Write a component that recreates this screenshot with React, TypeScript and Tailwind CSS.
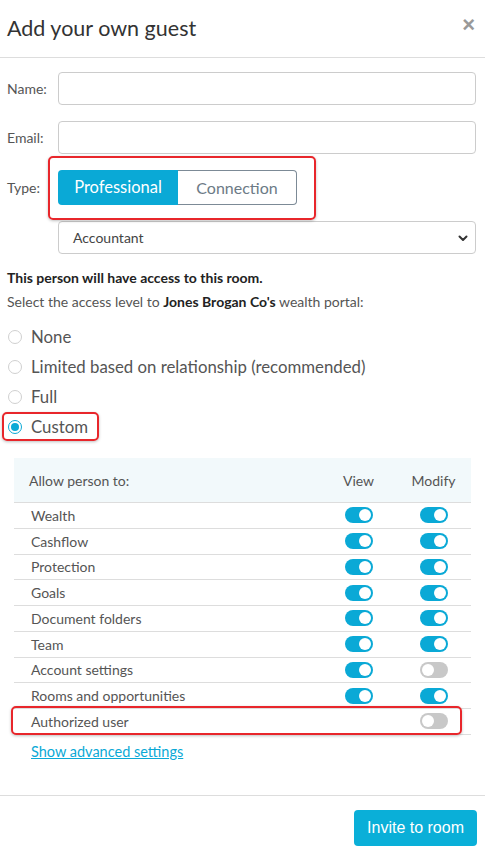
import React from "react"

const permissions = [
    { label: "Wealth", view: true, modify: true },
    { label: "Cashflow", view: true, modify: true },
    { label: "Protection", view: true, modify: true },
    { label: "Goals", view: true, modify: true },
    { label: "Document folders", view: true, modify: true },
    { label: "Team", view: true, modify: true },
    { label: "Account settings", view: true, modify: false },
    { label: "Rooms and opportunities", view: true, modify: true },
    { label: "Authorized user", view: null, modify: false, highlight: true },
]

const levels = ["None", "Limited based on relationship (recommended)", "Full", "Custom"]

const Toggle = ({ on }: { on: boolean }) => (
    <div className={`flex h-[16px] w-[28px] items-center rounded-full px-[2px] ${on ? "justify-end bg-[#0aa9d6]" : "justify-start bg-[#c8c8c8]"}`}>
        <div className="h-[12px] w-[12px] rounded-full bg-white" />
    </div>
)

const Highlight = ({ className }: { className: string }) => (
    <div className={`pointer-events-none absolute rounded-[5px] border-2 border-[#e8262b] shadow-[0_1px_3px_rgba(0,0,0,0.25)] ${className}`} />
)

const Field = ({ label, children }: { label: string; children: React.ReactNode }) => (
    <div className="flex items-center">
        <div className="w-[51px] shrink-0 text-[14px] text-[#555]">{label}</div>
        <div className="flex-1">{children}</div>
    </div>
)

const App = () => {
    return (
        <div className="min-h-[854px] w-[485px] bg-white text-[#444]" style={{ fontFamily: "Lato, 'Noto Sans', sans-serif" }}>
            <div className="flex h-[58px] items-center justify-between border-b border-[#ddd] pl-[7px] pr-[10px]">
                <div className="text-[21.5px] text-[#333]">{`Add your own guest`}</div>
                <div className="-mt-[8px] text-[22px] font-bold leading-none text-[#999]" style={{ fontFamily: "'Liberation Sans', sans-serif" }}>×</div>
            </div>

            <div className="flex flex-col gap-[16px] pl-[7px] pr-[9px] pt-[14px]">
                <Field label="Name:">
                    <div className="h-[33px] rounded-[4px] border border-[#ccc]" />
                </Field>
                <Field label="Email:">
                    <div className="h-[33px] rounded-[4px] border border-[#ccc]" />
                </Field>
                <Field label="Type:">
                    <div className="relative flex h-[35px] w-[239px]">
                        <Highlight className="-left-[10px] -right-[19px] -top-[14px] -bottom-[15px]" />
                        <div className="flex w-[120px] items-center justify-center rounded-l-[4px] bg-[#0aa9d6] text-[16.5px] text-white">{`Professional`}</div>
                        <div className="flex flex-1 items-center justify-center rounded-r-[4px] border border-l-0 border-[#7c8a96] text-[16px] text-[#6c7a86]">{`Connection`}</div>
                    </div>
                </Field>
                <Field label="">
                    <div className="flex h-[33px] items-center justify-between rounded-[4px] border border-[#ccc] pl-[14px] pr-[6px] text-[14px] text-[#444]">
                        <span>{`Accountant`}</span>
                        <svg width="12" height="12" viewBox="0 0 12 12" fill="none" stroke="#333" strokeWidth="2" strokeLinecap="round" strokeLinejoin="round">
                            <path d="M2.5 4.5 6 8l3.5-3.5" />
                        </svg>
                    </div>
                </Field>
            </div>

            <div className="pl-[7px] pt-[15px]">
                <div className="text-[14px] font-bold leading-[18px] text-[#222]">{`This person will have access to this room.`}</div>
                <div className="mt-[6px] text-[14px] leading-[18px] text-[#555]">
                    {`Select the access level to `}
                    <span className="font-bold text-[#222]">{`Jones Brogan Co's`}</span>
                    {` wealth portal:`}
                </div>
            </div>

            <div className="mt-[11px] flex flex-col pl-[8px]">
                {levels.map((level) => {
                    const checked = level === "Custom"
                    return (
                        <div key={level} className="flex h-[30px] items-center gap-[9px]">
                            <div className="relative flex items-center">
                                {checked && <Highlight className="-left-[6px] -top-[8px] -bottom-[7px] w-[97px]" />}
                                <div className={`flex h-[14px] w-[14px] items-center justify-center rounded-full border ${checked ? "border-[#0aa9d6]" : "border-[#d0d0d0]"}`}>
                                    {checked && <div className="h-[8px] w-[8px] rounded-full bg-[#0aa9d6]" />}
                                </div>
                            </div>
                            <span className="text-[16.8px] text-[#555]">{level}</span>
                        </div>
                    )
                })}
            </div>

            <div className="mx-[14px] mt-[16px]">
                <div className="flex h-[45px] items-center border-b border-[#ddd] bg-[#f2f9fb] text-[14px] text-[#555]">
                    <div className="flex-1 pl-[15px]">{`Allow person to:`}</div>
                    <div className="w-[75px] text-center">{`View`}</div>
                    <div className="w-[75px] text-center">{`Modify`}</div>
                </div>
                {permissions.map((p) => (
                    <div key={p.label} className="relative flex h-[25.75px] items-center border-b border-[#ddd] text-[14px] text-[#555]">
                        {p.highlight && <Highlight className="-left-[3px] right-[9px] -top-[3px] -bottom-[1px]" />}
                        <div className="flex-1 pl-[17px]">{p.label}</div>
                        <div className="flex w-[75px] justify-center">{p.view !== null && <Toggle on={!!p.view} />}</div>
                        <div className="flex w-[75px] justify-center">
                            <Toggle on={p.modify} />
                        </div>
                    </div>
                ))}
                <div className="pl-[17px] pt-[6px] text-[14.5px] text-[#0aa9d6] underline">{`Show advanced settings`}</div>
            </div>

            <div className="mt-[32px] flex justify-end border-t border-[#ddd] pr-[8px] pt-[14px]">
                <div className="flex h-[36px] w-[123px] items-center justify-center rounded-[4px] bg-[#0aafd8] text-[16px] text-white" style={{ fontFamily: "'Liberation Sans', Arial, sans-serif" }}>
                    {`Invite to room`}
                </div>
            </div>
        </div>
    )
}

export default App
